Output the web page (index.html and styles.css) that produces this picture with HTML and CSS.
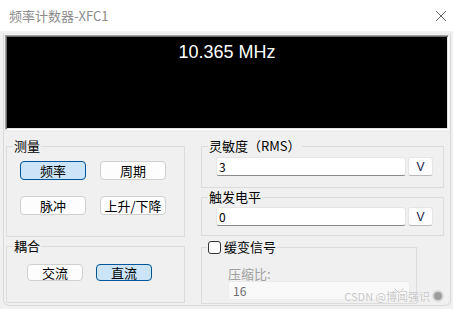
FILE: index.html
```html
<!DOCTYPE html>
<html lang="zh-CN">
<head>
  <meta charset="UTF-8" />
  <title>频率计数器-XFC1</title>
  <link rel="stylesheet" href="styles.css">
</head>
<body>
  <!-- Title bar -->
  <div class="titlebar">
    <span class="title">频率计数器-XFC1</span>
    <svg class="close" width="12" height="12" viewBox="0 0 12 12">
      <path d="M1 1 L11 11 M11 1 L1 11" stroke="#6b6b6b" stroke-width="1" fill="none" />
    </svg>
  </div>

  <div class="panel">
    <!-- Readout -->
    <div class="display">
      <span class="freq">10.365 MHz</span>
    </div>

    <div class="groups">
      <div class="col">
        <fieldset class="group measure">
          <legend>测量</legend>
          <div class="btn-grid">
            <button class="btn active">频率</button>
            <button class="btn">周期</button>
            <button class="btn">脉冲</button>
            <button class="btn">上升/下降</button>
          </div>
        </fieldset>

        <fieldset class="group coupling">
          <legend>耦合</legend>
          <div class="btn-row">
            <button class="btn small">交流</button>
            <button class="btn small active">直流</button>
          </div>
        </fieldset>
      </div>

      <div class="col">
        <fieldset class="group sens">
          <legend>灵敏度（RMS）</legend>
          <div class="field-row">
            <input class="field" type="text" value="3">
            <button class="unit">V</button>
          </div>
        </fieldset>

        <fieldset class="group trigger">
          <legend>触发电平</legend>
          <div class="field-row">
            <input class="field" type="text" value="0">
            <button class="unit">V</button>
          </div>
        </fieldset>

        <fieldset class="group ramp">
          <legend><span class="check"></span>缓变信号</legend>
          <div class="ramp-body">
            <div class="ratio-label">压缩比:</div>
            <div class="select">
              <span>16</span>
              <svg width="10" height="6" viewBox="0 0 10 6">
                <path d="M0.5 0.5 L5 5 L9.5 0.5" stroke="#c4c4c4" stroke-width="1" fill="none" />
              </svg>
            </div>
          </div>
        </fieldset>
      </div>
    </div>

    <div class="watermark">CSDN @博闻强识<span class="dot"></span></div>
  </div>
</body>
</html>
```

FILE: styles.css
```css
* {
  margin: 0;
  padding: 0;
  box-sizing: border-box;
}
body {
  width: 453px;
  height: 309px;
  overflow: hidden;
  background: #f0f0f0;
  font-family: "Noto Sans CJK SC", "Microsoft YaHei", sans-serif;
  font-size: 13px;
  color: #000;
}
/* Title bar */
.titlebar {
  height: 31px;
  background: #fff;
  display: flex;
  align-items: center;
  justify-content: space-between;
  padding: 0 6px 0 9px;
}
.title {
  color: #8c8c8c;
  font-size: 13px;
  line-height: 14px;
}
.close {
  display: block;
}
/* Main panel */
.panel {
  position: relative;
  height: 273px;
  margin: 2px 2px 3px 3px;
  border: 1px solid #d9d9d9;
  border-top-color: #ececec;
  border-radius: 0 0 6px 6px;
  padding: 1px 0 0 0;
}
.display {
  height: 95px;
  margin: 0 1px;
  background: #000;
  border: 1px solid;
  border-color: #a0a0a0 #ffffff #ffffff #a0a0a0;
  box-shadow: inset 1px 1px 0 #696969, inset -1px -1px 0 #e3e3e3;
  text-align: center;
  padding-top: 6px;
}
.freq {
  font-family: "Liberation Sans", Arial, sans-serif;
  font-size: 18px;
  line-height: 20px;
  color: #fff;
}
/* Group boxes */
.groups {
  display: grid;
  grid-template-columns: 179px 243px;
  column-gap: 16px;
  padding: 9px 0 0 2px;
}
.col {
  display: flex;
  flex-direction: column;
  align-items: flex-start;
}
.group {
  border: 1px solid #dcdcdc;
  min-width: 0;
}
.group legend {
  margin-left: 6px;
  padding: 0 1px;
  font-size: 13px;
  line-height: 14px;
}
.measure {
  width: 179px;
  padding: 8px 0 21px 0;
}
.coupling {
  width: 179px;
  margin-top: 2px;
  padding: 11px 0 21px 0;
}
.btn-grid {
  display: grid;
  grid-template-columns: 66px 66px;
  column-gap: 14px;
  row-gap: 16px;
  padding-left: 13px;
}
.btn-row {
  display: flex;
  gap: 13px;
  padding-left: 20px;
}
.btn {
  height: 19px;
  background: #fdfdfd;
  border: 1px solid #d0d0d0;
  border-radius: 4px;
  font-family: inherit;
  font-size: 13px;
  line-height: 17px;
  color: #000;
}
.btn.small {
  width: 56px;
  height: 17px;
  line-height: 15px;
}
.btn.active {
  background: #cce4f7;
  border-color: #005499;
}
/* Input rows */
.sens,
.trigger {
  width: 243px;
}
.sens {
  padding-top: 4px;
  padding-bottom: 11px;
}
.trigger {
  margin-top: 2px;
  padding-top: 3px;
  padding-bottom: 9px;
}
.field-row {
  display: flex;
  gap: 2px;
  padding-left: 14px;
}
.field {
  width: 190px;
  height: 19px;
  background: #fff;
  border: 1px solid #e5e5e5;
  border-bottom-color: #8a8a8a;
  border-radius: 3px;
  padding: 0 2px;
  font-family: inherit;
  font-size: 12px;
  color: #000;
  outline: none;
}
.unit {
  width: 25px;
  height: 19px;
  background: #fdfdfd;
  border: 1px solid #e5e5e5;
  border-bottom-color: #b8b8b8;
  border-radius: 3px;
  font-family: "Liberation Sans", Arial, sans-serif;
  font-size: 12px;
  color: #1a1a4a;
}
/* Ramp signal */
.ramp {
  width: 216px;
  margin-top: 4px;
  padding: 13px 0 3px 0;
}
.ramp legend {
  display: flex;
  align-items: center;
  gap: 3px;
  margin-left: 5px;
}
.ramp-body {
  padding-left: 26px;
}
.check {
  width: 13px;
  height: 13px;
  background: #fff;
  border: 1px solid #333;
  border-radius: 3px;
}
.ratio-label {
  color: #a0a0a0;
  line-height: 14px;
}
.select {
  width: 182px;
  height: 19px;
  background: #f9f9f9;
  border: 1px solid #ececec;
  border-radius: 3px;
  display: flex;
  align-items: center;
  justify-content: space-between;
  padding: 0 5px 0 4px;
  font-size: 12px;
  color: #6d6d6d;
}
/* Watermark overlay */
.watermark {
  position: absolute;
  right: 6px;
  bottom: 3px;
  display: flex;
  align-items: center;
  gap: 2px;
  font-size: 11px;
  line-height: 12px;
  color: #c8c8c8;
  text-shadow: 0 0 1px #fff;
}
.dot {
  width: 12px;
  height: 12px;
  border-radius: 50%;
  background: #9c9c9c;
  border: 2px solid #d8d8d8;
}
```
